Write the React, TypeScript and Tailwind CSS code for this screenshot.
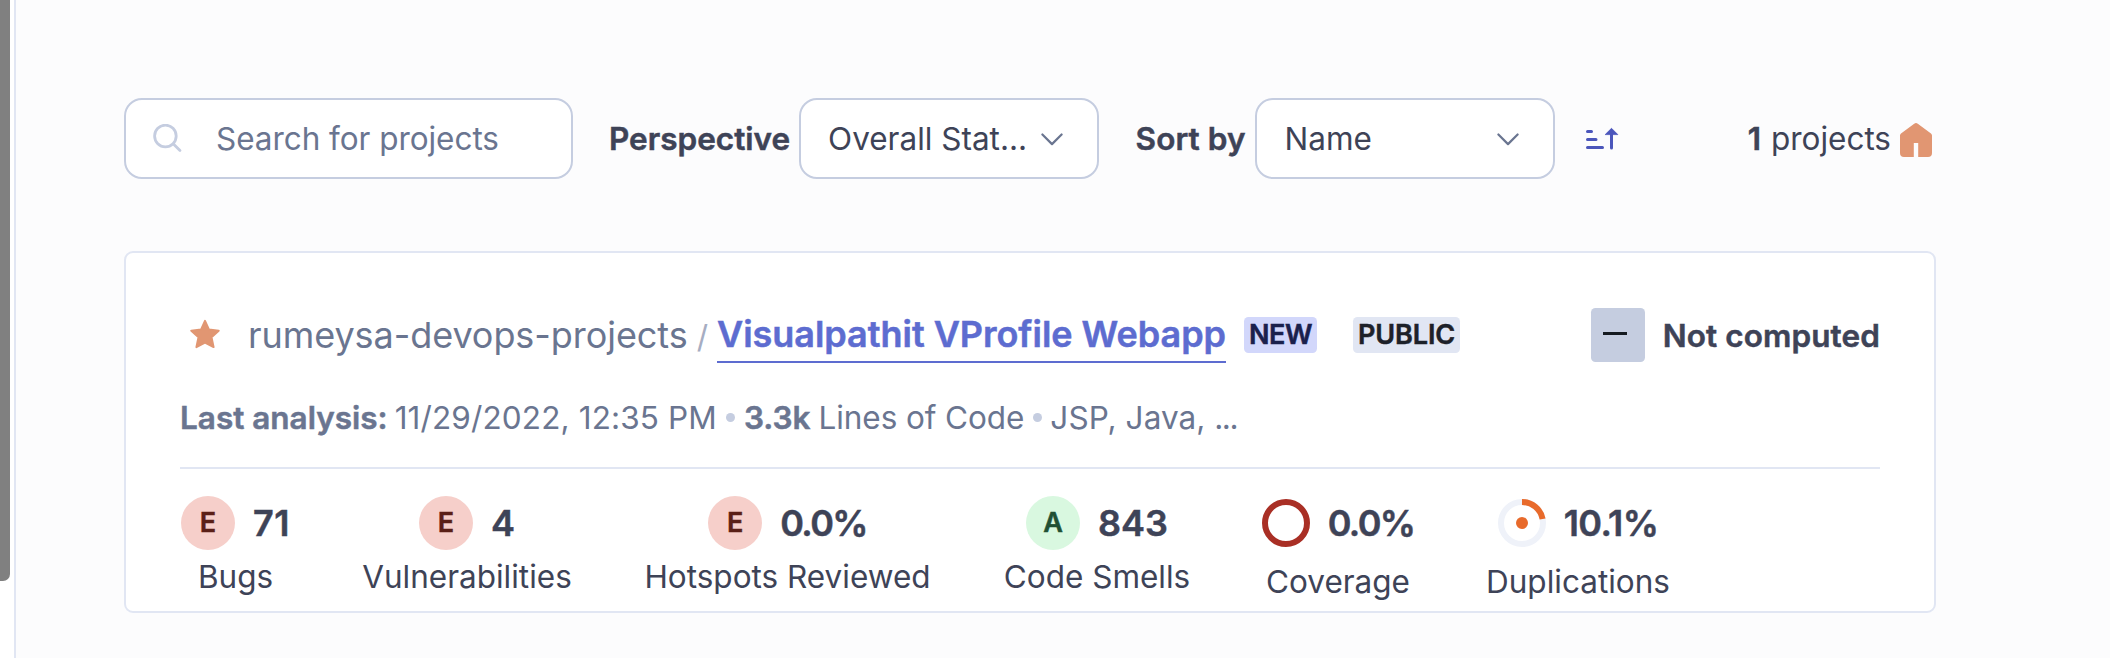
import type { ReactNode } from "react";

function SearchIcon() {
  return (
    <svg className="h-[30px] w-[30px] shrink-0" viewBox="0 0 30 30" fill="none" stroke="#c5cde0" strokeWidth="2.8" strokeLinecap="round">
      <circle cx="12.4" cy="12" r="10.8" />
      <path d="M20.4 20l6.6 6.6" />
    </svg>
  );
}

function Chevron() {
  return (
    <svg className="h-[14px] w-[22px] shrink-0" viewBox="0 0 22 14" fill="none" stroke="#6a7590" strokeWidth="2.2" strokeLinecap="round" strokeLinejoin="round">
      <path d="M1.4 2.5L11 12.1 20.6 2.5" />
    </svg>
  );
}

function SortIcon() {
  return (
    <svg className="h-[24px] w-[34px] shrink-0" viewBox="0 0 34 24">
      <g stroke="#4b56bb" strokeWidth="3" strokeLinecap="round">
        <path d="M2.5 4.5h4M2.5 12.5h8.5M2.5 20.5h15M26.5 6v15" />
      </g>
      <path d="M26.5 1.3L32.8 7.6H20.2z" fill="#4b56bb" stroke="#4b56bb" strokeWidth="0.8" strokeLinejoin="round" />
    </svg>
  );
}

function HomeIcon() {
  return (
    <svg className="h-[34px] w-[32px] shrink-0" viewBox="0 0 32 34" fill="#e19672">
      <path d="M14.2 0.7a3 3 0 0 1 3.6 0L31 10.6a2.6 2.6 0 0 1 1 2V30a4 4 0 0 1-4 4H18.2V20h-4.4v14H4a4 4 0 0 1-4-4V12.6a2.6 2.6 0 0 1 1-2z" />
    </svg>
  );
}

function StarIcon() {
  return (
    <svg className="h-[30px] w-[30px] shrink-0" viewBox="0 0 30 30" fill="#e19672" stroke="#e19672" strokeWidth="2" strokeLinejoin="round">
      <path d="M15 1.8l4 8.8 9.7 1.1-7.2 6.6 2.1 9.8L15 23.6l-8.6 4.5 2.1-9.8-7.2-6.6 9.7-1.1z" />
    </svg>
  );
}

function Strong({ children }: { children: ReactNode }) {
  return <b className="font-semibold [-webkit-text-stroke:0.5px_currentColor]">{children}</b>;
}

function Select({ label }: { label: string }) {
  return (
    <div className="flex h-[81px] w-[300px] items-center justify-between rounded-[18px] border-2 border-[#c5cde0] bg-white pl-[27px] pr-[34px]">
      <span>{label}</span>
      <Chevron />
    </div>
  );
}

function Rating({ letter, tone }: { letter: string; tone: string }) {
  return (
    <span className={`flex h-[54px] w-[54px] items-center justify-center rounded-full pb-[2px] text-[27px] ${tone}`}>
      <Strong>{letter}</Strong>
    </span>
  );
}

function CoverageRing() {
  return (
    <svg className="h-[48px] w-[48px]" viewBox="0 0 48 48" fill="none">
      <circle cx="24" cy="24" r="21" stroke="#a92f25" strokeWidth="6" />
    </svg>
  );
}

function DuplicationRing() {
  return (
    <svg className="h-[48px] w-[48px]" viewBox="0 0 48 48" fill="none">
      <circle cx="24" cy="24" r="21" stroke="#eff2f9" strokeWidth="6" />
      <path d="M24 3a21 21 0 0 1 20.6 17" stroke="#e86a2b" strokeWidth="6" />
      <circle cx="24" cy="24" r="6" fill="#e86a2b" />
    </svg>
  );
}

interface MetricProps {
  icon: ReactNode;
  value: string;
  label: string;
  size: string;
  tracking?: string;
  low?: boolean;
}

function Metric({ icon, value, label, size, tracking = "", low = false }: MetricProps) {
  return (
    <div className={`flex flex-col items-center ${size}`}>
      <div className="flex h-[54px] items-center gap-[18px]">
        {icon}
        <span className={`text-[36px] ${tracking}`}>
          <Strong>{value}</Strong>
        </span>
      </div>
      <span className={low ? "mt-[9px] leading-[45px]" : "mt-[4px] leading-[45px]"}>{label}</span>
    </div>
  );
}

const RED = "bg-[#f6cfca] text-[#5a1f17]";
const GREEN = "bg-[#d9f8e0] text-[#215034]";

export default function App() {
  return (
    <div className="flex h-[658px] w-[2110px] overflow-hidden bg-[#fcfcfd] font-['Inter',sans-serif] text-[31.5px] leading-[45px] whitespace-nowrap text-[#3e4357]">
      <aside className="h-full w-[16px] shrink-0 border-r-2 border-[#e1e6f3] bg-white">
        <div className="h-[581px] w-[10px] rounded-br-[7px] bg-[#808080]" />
      </aside>

      <main className="ml-[108px] w-[1812px] pt-[98px]">
        <div className="flex h-[81px] items-center">
          <div className="flex h-[81px] w-[449px] items-center rounded-[18px] border-2 border-[#c5cde0] bg-white pl-[27px] text-[#6a7590]">
            <SearchIcon />
            <span className="ml-[33px] tracking-[-0.05px]">Search for projects</span>
          </div>
          <span className="ml-[36px]">
            <Strong>Perspective</Strong>
          </span>
          <div className="ml-[9px]">
            <Select label="Overall Stat..." />
          </div>
          <span className="ml-[36.5px] tracking-[0.1px]">
            <Strong>Sort by</Strong>
          </span>
          <div className="ml-[9.8px]">
            <Select label="Name" />
          </div>
          <div className="ml-[30px]">
            <SortIcon />
          </div>
          <div className="mr-[4px] ml-auto flex items-center gap-[9px]">
            <span className="[word-spacing:1px]">
              <Strong>1</Strong> projects
            </span>
            <span className="pt-[3px]">
              <HomeIcon />
            </span>
          </div>
        </div>

        <section className="mt-[72px] h-[362px] rounded-[9px] border-2 border-[#e1e6f3] bg-white px-[54px] pt-[55px]">
          <div className="flex h-[54px] items-center">
            <div className="ml-[10px] pb-[3px]">
              <StarIcon />
            </div>
            <span className="ml-[28px] text-[36px] tracking-[-0.06px] text-[#6a7590]">rumeysa-devops-projects</span>
            <span className="ml-[9px] pt-[2px] text-[#a6adc2]">/</span>
            <a className="ml-[9px] border-b-2 border-[#5d6cd0] pb-[4px] pt-[4px] text-[36px] tracking-[-0.03px] text-[#5d6cd0]">
              <Strong>Visualpathit VProfile Webapp</Strong>
            </a>
            <span className="ml-[18px] flex h-[36px] w-[73px] items-center justify-center rounded-[4.5px] bg-[#d2d7fb] pb-[2px] text-[27px] tracking-[-0.4px] text-[#1a204c]">
              <Strong>NEW</Strong>
            </span>
            <span className="ml-[36px] flex h-[36px] w-[107px] items-center justify-center rounded-[4.5px] bg-[#e1e6f3] pb-[2px] text-[27px] tracking-[-0.1px] text-[#1d2129]">
              <Strong>PUBLIC</Strong>
            </span>
            <span className="ml-auto flex h-[54px] w-[54px] rounded-[4.5px] bg-[#c5cde0] pt-[24px] pl-[12px]">
              <span className="h-[3px] w-[24px] bg-[#151a20]" />
            </span>
            <span className="ml-[18px] tracking-[0.1px]">
              <Strong>Not computed</Strong>
            </span>
          </div>

          <div className="mt-[33px] flex items-center text-[#6a7590]">
            <Strong>Last analysis:</Strong>
            <span className="ml-[7px] tracking-[0.13px]">11/29/2022, 12:35 PM</span>
            <i className="mx-[9px] h-[9px] w-[9px] rounded-full bg-[#c5cde0]" />
            <Strong>3.3k</Strong>
            <span className="ml-[8px] tracking-[-0.08px]">Lines of Code</span>
            <i className="mx-[8.5px] h-[9px] w-[9px] rounded-full bg-[#c5cde0]" />
            <span className="tracking-[0.05px]">
              JSP, Java, <span className="tracking-[-1.5px]">...</span>
            </span>
          </div>

          <div className="mt-[27px] flex gap-[72px] border-t-2 border-[#e1e6f3] pt-[27px]">
            <Metric icon={<Rating letter="E" tone={RED} />} value="71" label="Bugs" size="w-[111px]" tracking="tracking-[0.6px]" />
            <Metric icon={<Rating letter="E" tone={RED} />} value="4" label="Vulnerabilities" size="w-[208px]" />
            <Metric icon={<Rating letter="E" tone={RED} />} value="0.0%" label="Hotspots Reviewed" size="w-[289px]" tracking="tracking-[-1.6px]" />
            <Metric icon={<Rating letter="A" tone={GREEN} />} value="843" label="Code Smells" size="w-[186px]" />
            <Metric icon={<CoverageRing />} value="0.0%" label="Coverage" size="w-[152px]" tracking="tracking-[-1.6px]" low />
            <Metric icon={<DuplicationRing />} value="10.1%" label="Duplications" size="w-[184px]" tracking="tracking-[-0.6px]" low />
          </div>
        </section>
      </main>
    </div>
  );
}
